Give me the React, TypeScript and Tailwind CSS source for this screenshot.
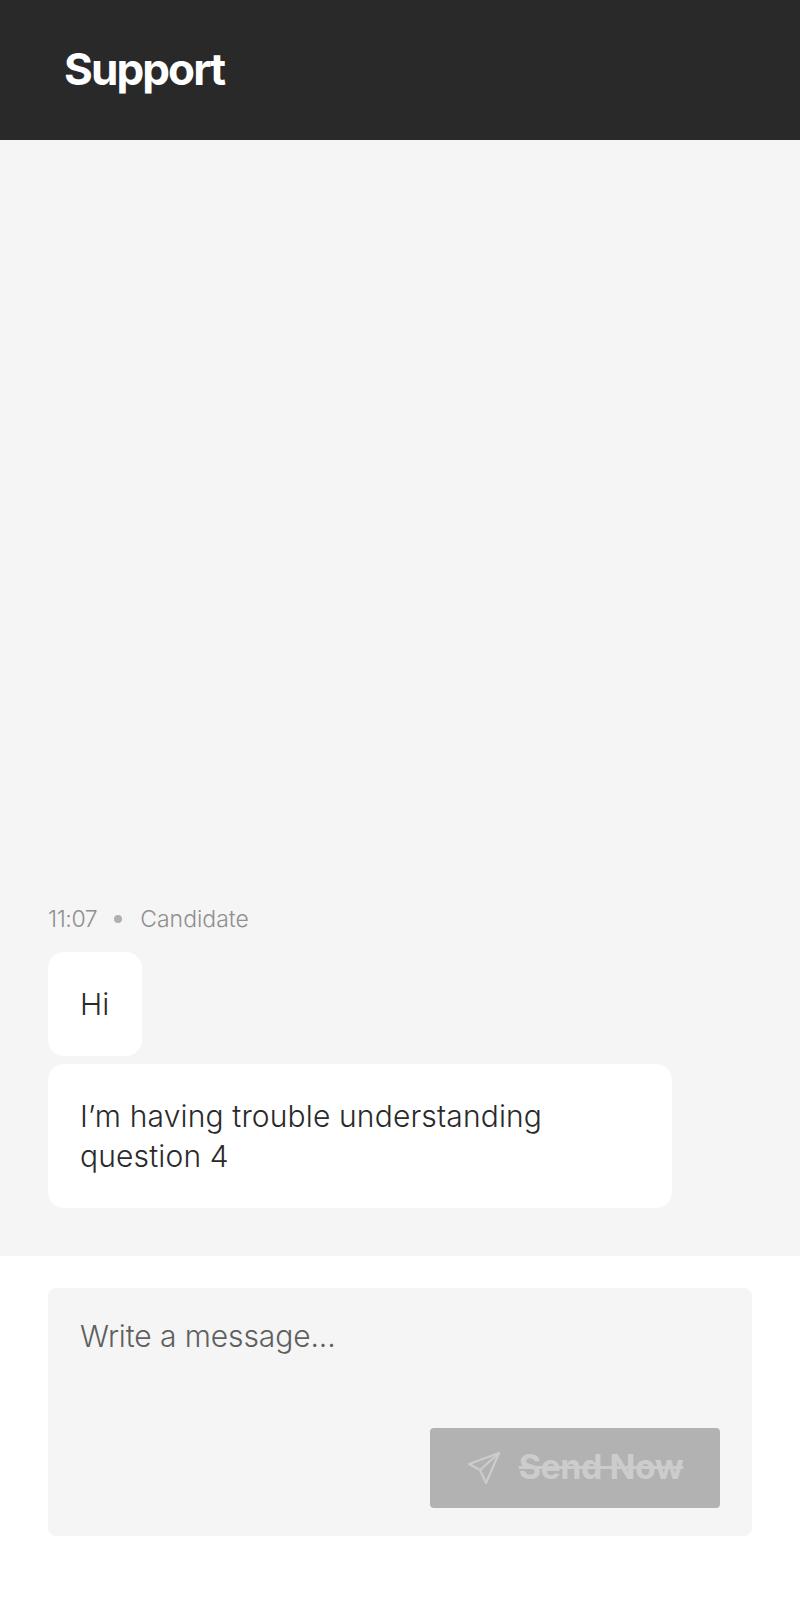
export default function App() {
  return (
    <div className="flex h-[1600px] w-[800px] flex-col bg-white font-['Inter',sans-serif]">
      <header className="flex h-[140px] items-center bg-[#292929] px-16">
        <h1 className="-mt-0.5 text-[44px] font-bold tracking-[-1.9px] text-white">Support</h1>
      </header>
      <main className="flex flex-1 flex-col items-start justify-end bg-[#f5f5f5] px-12 pb-12">
        <div className="mb-[18px] flex items-center text-[23px] font-light leading-[30px] text-[#8f8f8f]">
          <span className="tracking-[-0.4px]">11:07</span>
          <span className="mr-[18px] ml-[17px] h-2 w-2 rounded-full bg-[#b0b0b0]" />
          <span>Candidate</span>
        </div>
        <div className="mb-2 w-[94px] rounded-2xl bg-white px-8 py-8 text-[30px] font-light leading-10 text-[#2a2a2a]">Hi</div>
        <div className="w-[624px] rounded-2xl bg-white px-8 py-8 text-[30px] font-light leading-10 tracking-[0.15px] text-[#2a2a2a]">
          I’m having trouble understanding question 4
        </div>
      </main>
      <footer className="h-[344px] bg-white px-12 pt-8">
        <div className="flex h-[248px] flex-col justify-between rounded-lg bg-[#f5f5f5] px-8 pt-[28px] pb-7">
          <p className="text-[30px] font-light leading-10 tracking-[-0.1px] text-[#5f5f5f]">Write a message...</p>
          <div className="flex justify-end">
            <button
              type="button"
              className="flex h-20 w-[290px] items-center justify-center gap-[18px] rounded-[4px] bg-[#b2b2b2] text-[#cccccc]"
            >
              <svg width="34" height="34" viewBox="0 0 34 34" fill="none" stroke="currentColor" strokeWidth="2.2" strokeLinejoin="round" strokeLinecap="round">
                <path d="M2 13L32 2L19 32L13 19Z" />
                <path d="M32 2L13 19" />
              </svg>
              <span className="-mt-0.5 text-[34px] font-bold leading-10 tracking-[-0.5px] line-through">Send Now</span>
            </button>
          </div>
        </div>
      </footer>
    </div>
  );
}
